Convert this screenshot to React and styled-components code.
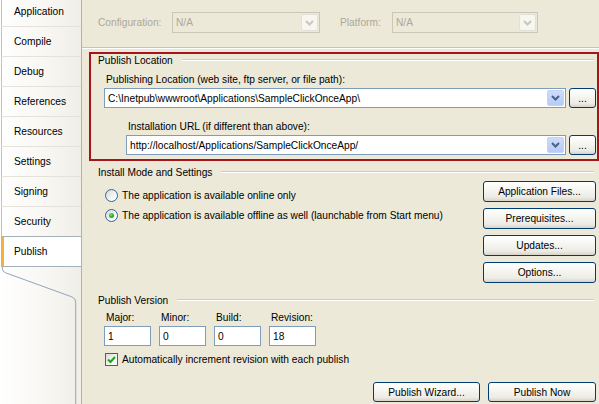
import React from 'react';
import styled, { createGlobalStyle } from 'styled-components';

const Global = createGlobalStyle`
  html, body { margin: 0; padding: 0; }
  body {
    width: 599px; height: 404px; overflow: hidden; background: #ece9d8;
    font-family: "Liberation Sans", Arial, sans-serif;
  }
`;

const Page = styled.div`
  display: flex;
  width: 599px;
  height: 404px;
  overflow: hidden;
  font-family: "Liberation Sans", Arial, sans-serif;
  font-size: 10.2px;
  color: #000;
`;

const Sidebar = styled.nav`
  width: 81px;
  flex: none;
  display: flex;
  flex-direction: column;
  background: linear-gradient(to right, #ffffff 0%, #f8f7f3 55%, #efeee7 100%);
  border-right: 1px solid #a7b3bf;
`;

const TabList = styled.ul`
  list-style: none;
  margin: -3px 0 0 0;
  padding: 0;
`;

const Tab = styled.li`
  box-sizing: border-box;
  height: 30px;
  display: flex;
  align-items: center;
  margin-left: 1px;
  padding-left: ${p => (p.$active ? 10 : 12)}px;
  border-left: ${p => (p.$active ? '3px solid #f1b23c' : '1px solid #b9c4cf')};
  border-bottom: 1px solid ${p => (p.$active ? '#a4b0bc' : '#e4e2da')};
  border-top: ${p => (p.$active ? '1px solid #a4b0bc' : '0')};
  margin-top: ${p => (p.$active ? '-1px' : '0')};
  height: ${p => (p.$active ? 31 : 30)}px;
  background: ${p => (p.$active ? '#ffffff' : 'transparent')};
`;

const Tail = styled.svg`
  display: block;
  width: 81px;
  height: 140px;
`;

const Main = styled.main`
  flex: 1;
  display: flex;
  flex-direction: column;
  padding: 12px 3px 0 16px;
  background: #ece9d8;
`;

const TopRow = styled.div`
  display: flex;
  align-items: center;
  height: 21px;
`;

const DimLabel = styled.span`
  flex: none;
  width: ${p => p.$w}px;
  margin-left: ${p => p.$ml || 0}px;
  color: #aca899;
`;

const Combo = styled.div`
  box-sizing: border-box;
  display: flex;
  align-items: stretch;
  height: ${p => p.$h || 20}px;
  width: ${p => (p.$w ? `${p.$w}px` : 'auto')};
  flex: ${p => (p.$w ? 'none' : '1')};
  border: 1px solid ${p => (p.$disabled ? '#c9c7ba' : '#7f9db9')};
  background: ${p => (p.$disabled ? '#ece9d8' : '#ffffff')};
  color: ${p => (p.$disabled ? '#aca899' : '#000')};
`;

const ComboText = styled.span`
  flex: 1;
  display: flex;
  align-items: center;
  padding-left: 3px;
  white-space: nowrap;
  overflow: hidden;
`;

const DropBtn = styled.span`
  box-sizing: border-box;
  width: 17px;
  margin: 1px;
  display: flex;
  align-items: center;
  justify-content: center;
  border-radius: 2px;
  border: 1px solid ${p => (p.$disabled ? '#e3e1d7' : '#c3d3f6')};
  background: ${p => (p.$disabled ? '#f7f6f1' : 'linear-gradient(#cddcfc, #b7cbf7)')};
`;

const Separator = styled.div`
  margin: 14px -3px 0 -16px;
  border-top: 1px solid #c7c4b4;
  border-bottom: 1px solid #ffffff;
`;

const Highlight = styled.section`
  margin: 3px -3px 0 -9px;
  border: 2px solid #a5161a;
  padding: 0 1px 4px 7px;
  display: flex;
  flex-direction: column;
`;

const GroupHeader = styled.div`
  display: flex;
  align-items: center;
  height: 12px;
  margin-top: ${p => p.$mt || 0}px;
  margin-right: 2px;
  white-space: nowrap;
  &::after {
    content: '';
    flex: 1;
    margin-left: 9px;
    border-top: 1px solid #cfccbc;
    border-bottom: 1px solid #ffffff;
  }
`;

const FieldLabel = styled.div`
  height: 12px;
  line-height: 12px;
  margin-top: ${p => p.$mt || 0}px;
  padding-left: ${p => p.$indent || 0}px;
  white-space: nowrap;
`;

const PathRow = styled.div`
  display: flex;
  gap: 3px;
  margin-top: 2px;
  padding-left: ${p => p.$indent}px;
`;

const Button = styled.button`
  box-sizing: border-box;
  flex: none;
  width: ${p => p.$w}px;
  height: ${p => p.$h || 21}px;
  padding: 0;
  border: 1px solid #003c74;
  border-radius: 3px;
  background: linear-gradient(180deg, #ffffff 0%, #f6f6f2 40%, #ecebe5 80%, #d9d3c7 100%);
  font: inherit;
  color: #000;
  white-space: nowrap;
`;

const InstallRow = styled.div`
  display: flex;
  justify-content: space-between;
  margin-top: 3px;
`;

const RadioGroup = styled.div`
  display: flex;
  flex-direction: column;
  gap: 7px;
  padding: 8px 0 0 7px;
`;

const Option = styled.label`
  display: flex;
  align-items: center;
  gap: 4px;
  height: 13px;
  white-space: nowrap;
`;

const RadioCircle = styled.span`
  box-sizing: border-box;
  flex: none;
  width: 13px;
  height: 13px;
  border-radius: 50%;
  border: 1px solid #3a6390;
  background: linear-gradient(135deg, #d8d8d2 0%, #f3f3ef 55%, #ffffff 100%);
  display: flex;
  align-items: center;
  justify-content: center;
  &::after {
    content: '';
    display: ${p => (p.$checked ? 'block' : 'none')};
    width: 5px;
    height: 5px;
    border-radius: 50%;
    background: radial-gradient(circle at 40% 35%, #7ee07e 0%, #2fb52f 45%, #1b8c1b 100%);
  }
`;

const CheckBox = styled.span`
  box-sizing: border-box;
  flex: none;
  width: 13px;
  height: 13px;
  border: 1px solid #3a6390;
  background: linear-gradient(135deg, #dcdcd6 0%, #f4f4f0 55%, #ffffff 100%);
  display: flex;
  align-items: center;
  justify-content: center;
`;

const ButtonColumn = styled.div`
  display: flex;
  flex-direction: column;
  gap: 6px;
`;

const VersionRow = styled.div`
  display: flex;
  gap: 8px;
  margin-top: 6px;
  padding-left: 6px;
`;

const VersionField = styled.div`
  display: flex;
  flex-direction: column;
  width: 47px;
`;

const TextBox = styled.div`
  box-sizing: border-box;
  height: 20px;
  margin-top: 2px;
  display: flex;
  align-items: center;
  padding-left: 3px;
  border: 1px solid #7f9db9;
  background: #ffffff;
`;

const CheckRow = styled.div`
  margin-top: 7px;
  padding-left: 7px;
`;

const BottomBar = styled.div`
  display: flex;
  justify-content: flex-end;
  gap: 8px;
  margin-top: 16px;
`;

const Chevron = ({ disabled }) => (
  <svg width="9" height="6" viewBox="0 0 9 6">
    <path
      d="M1 1 L4.5 4.5 L8 1"
      fill="none"
      stroke={disabled ? '#c9c7ba' : '#4d6185'}
      strokeWidth="2"
    />
  </svg>
);

const tabs = ['Application', 'Compile', 'Debug', 'References', 'Resources', 'Settings', 'Signing', 'Security', 'Publish'];

export default function App() {
  return (
    <Page>
      <Global />
      <Sidebar>
        <TabList>
          {tabs.map(t => (
            <Tab key={t} $active={t === 'Publish'}>{t}</Tab>
          ))}
        </TabList>
        <Tail viewBox="0 0 81 140">
          <path
            d="M1.5 0 L1.5 2 Q1.5 4.5 5 6 L72.5 30.5 Q76.5 32 76.5 36 L76.5 140"
            fill="none"
            stroke="#8fa2b5"
            strokeWidth="1"
          />
        </Tail>
      </Sidebar>

      <Main>
        <TopRow>
          <DimLabel $w={74}>Configuration:</DimLabel>
          <Combo $disabled $w={148} $h={21}>
            <ComboText>N/A</ComboText>
            <DropBtn $disabled><Chevron disabled /></DropBtn>
          </Combo>
          <DimLabel $w={52} $ml={20}>Platform:</DimLabel>
          <Combo $disabled $w={146} $h={21}>
            <ComboText>N/A</ComboText>
            <DropBtn $disabled><Chevron disabled /></DropBtn>
          </Combo>
        </TopRow>
        <Separator />

        <Highlight>
          <GroupHeader>Publish Location</GroupHeader>
          <FieldLabel $mt={8} $indent={8}>Publishing Location (web site, ftp server, or file path):</FieldLabel>
          <PathRow $indent={6}>
            <Combo>
              <ComboText>C:\Inetpub\wwwroot\Applications\SampleClickOnceApp\</ComboText>
              <DropBtn><Chevron /></DropBtn>
            </Combo>
            <Button $w={27} $h={20}>...</Button>
          </PathRow>
          <FieldLabel $mt={13} $indent={30}>Installation URL (if different than above):</FieldLabel>
          <PathRow $indent={28}>
            <Combo>
              <ComboText>http://localhost/Applications/SampleClickOnceApp/</ComboText>
              <DropBtn><Chevron /></DropBtn>
            </Combo>
            <Button $w={27} $h={20}>...</Button>
          </PathRow>
        </Highlight>

        <GroupHeader $mt={5}>Install Mode and Settings</GroupHeader>
        <InstallRow>
          <RadioGroup>
            <Option><RadioCircle />The application is available online only</Option>
            <Option><RadioCircle $checked />The application is available offline as well (launchable from Start menu)</Option>
          </RadioGroup>
          <ButtonColumn>
            <Button $w={113}>Application Files...</Button>
            <Button $w={113}>Prerequisites...</Button>
            <Button $w={113}>Updates...</Button>
            <Button $w={113}>Options...</Button>
          </ButtonColumn>
        </InstallRow>

        <GroupHeader $mt={11}>Publish Version</GroupHeader>
        <VersionRow>
          {[['Major:', '1'], ['Minor:', '0'], ['Build:', '0'], ['Revision:', '18']].map(([l, v]) => (
            <VersionField key={l}>
              <FieldLabel $indent={2}>{l}</FieldLabel>
              <TextBox>{v}</TextBox>
            </VersionField>
          ))}
        </VersionRow>
        <CheckRow>
          <Option>
            <CheckBox>
              <svg width="9" height="8" viewBox="0 0 9 8">
                <path d="M1 3.5 L3.5 6 L8 1" fill="none" stroke="#21a121" strokeWidth="2" />
              </svg>
            </CheckBox>
            Automatically increment revision with each publish
          </Option>
        </CheckRow>

        <BottomBar>
          <Button $w={107} $h={20}>Publish Wizard...</Button>
          <Button $w={108} $h={20}>Publish Now</Button>
        </BottomBar>
      </Main>
    </Page>
  );
}
